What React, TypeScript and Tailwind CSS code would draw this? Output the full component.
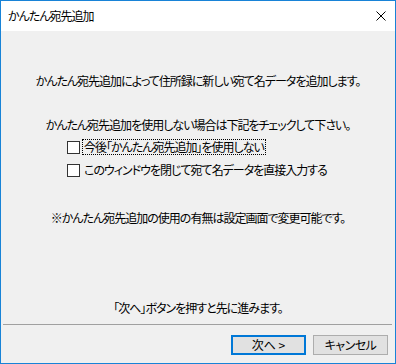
export default function App() {
  return (
    <div className="w-[396px] h-[364px] border border-[#1883d7] flex flex-col text-[12px] leading-[16px] tracking-[-1px] text-black font-['Noto_Sans_CJK_JP',sans-serif] [font-feature-settings:'palt']">
      <div className="h-[30px] bg-white flex items-center justify-between pl-[7px] pr-[9px]">
        <span>かんたん宛先追加</span>
        <svg width="10" height="10" viewBox="0 0 10 10" className="block">
          <path d="M0.5 0.5 L9.5 9.5 M9.5 0.5 L0.5 9.5" stroke="#000" strokeWidth="1" />
        </svg>
      </div>

      <div className="flex-1 bg-[#f0f0f0] flex flex-col pt-[42px]">
        <p className="text-center">かんたん宛先追加によって住所録に新しい宛て名データを追加します。</p>
        <p className="text-center mt-[28px]">かんたん宛先追加を使用しない場合は下記をチェックして下さい。</p>

        <div className="flex flex-col pl-[66px] mt-[6px] gap-[7px]">
          <label className="flex items-center h-[16px]">
            <span className="w-[13px] h-[13px] border border-[#333] bg-white shrink-0" />
            <span className="ml-[2px] px-[1px] border border-dotted border-black leading-[14px]">今後「かんたん宛先追加」を使用しない</span>
          </label>
          <label className="flex items-center h-[16px]">
            <span className="w-[13px] h-[13px] border border-[#333] bg-white shrink-0" />
            <span className="ml-[3px] px-[1px]">このウィンドウを閉じて宛て名データを直接入力する</span>
          </label>
        </div>

        <p className="text-center mt-[32px]">※かんたん宛先追加の使用の有無は設定画面で変更可能です。</p>

        <p className="text-center mt-[74px]">「次へ」ボタンを押すと先に進みます。</p>

        <div className="h-px bg-[#a0a0a0] mt-[8px] ml-[2px] mr-[3px]" />

        <div className="flex justify-end gap-[7px] mt-[10px] pr-[7px]">
          <button className="w-[75px] h-[20px] bg-[#e1e1e1] border-2 border-[#0078d7] flex items-center justify-center leading-none tracking-normal">
            次へ&nbsp;&gt;
          </button>
          <button className="w-[75px] h-[20px] bg-[#e1e1e1] border border-[#adadad] flex items-center justify-center leading-none tracking-[-0.5px]">
            キャンセル
          </button>
        </div>
      </div>
    </div>
  );
}
